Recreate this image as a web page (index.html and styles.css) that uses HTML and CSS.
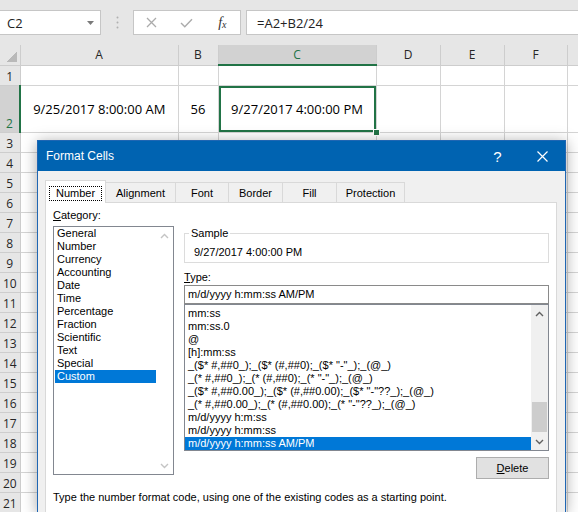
FILE: index.html
```html
<!DOCTYPE html>
<html lang="en">
<head>
    <meta charset="UTF-8">
    <title>Format Cells</title>
    <link rel="stylesheet" href="styles.css">
</head>
<body>

<div class="topbar">
    <div class="namebox">
        <span>C2</span>
        <svg width="7" height="4" viewBox="0 0 7 4"><polygon points="0,0 7,0 3.5,4" fill="#7a7a7a"/></svg>
    </div>
    <div class="grip">
        <svg width="3" height="13" viewBox="0 0 3 13"><circle cx="1.5" cy="1.5" r="1" fill="#b0b0b0"/><circle cx="1.5" cy="6.5" r="1" fill="#b0b0b0"/><circle cx="1.5" cy="11.5" r="1" fill="#b0b0b0"/></svg>
    </div>
    <div class="fxbtns">
        <span><svg width="11" height="11" viewBox="0 0 11 11"><path d="M1 1L10 10M10 1L1 10" stroke="#ababab" stroke-width="1.3"/></svg></span>
        <span><svg width="13" height="10" viewBox="0 0 13 10"><path d="M1 5L4.8 8.8L12 1.2" fill="none" stroke="#ababab" stroke-width="1.4"/></svg></span>
        <span class="fx">f<small>x</small></span>
    </div>
    <div class="formula">=A2+B2/24</div>
</div>

<table class="sheet">
    <colgroup>
        <col class="w-rh"><col class="w-a"><col class="w-b"><col class="w-c"><col class="w-d"><col class="w-e"><col class="w-f"><col class="w-g">
    </colgroup>
    <tr class="hdr">
        <th class="corner"></th><th>A</th><th>B</th><th class="sel-col">C</th><th>D</th><th>E</th><th>F</th><th></th>
    </tr>
    <tr><td class="rh">1</td><td></td><td></td><td></td><td></td><td></td><td></td><td></td></tr>
    <tr class="tall">
        <td class="rh sel-row">2</td>
        <td>9/25/2017 8:00:00 AM</td>
        <td>56</td>
        <td class="active">9/27/2017 4:00:00 PM<span class="handle"></span></td>
        <td></td><td></td><td></td><td></td>
    </tr>
    <tr><td class="rh">3</td><td></td><td></td><td></td><td></td><td></td><td></td><td></td></tr>
    <tr><td class="rh">4</td><td></td><td></td><td></td><td></td><td></td><td></td><td></td></tr>
    <tr><td class="rh">5</td><td></td><td></td><td></td><td></td><td></td><td></td><td></td></tr>
    <tr><td class="rh">6</td><td></td><td></td><td></td><td></td><td></td><td></td><td></td></tr>
    <tr><td class="rh">7</td><td></td><td></td><td></td><td></td><td></td><td></td><td></td></tr>
    <tr><td class="rh">8</td><td></td><td></td><td></td><td></td><td></td><td></td><td></td></tr>
    <tr><td class="rh">9</td><td></td><td></td><td></td><td></td><td></td><td></td><td></td></tr>
    <tr><td class="rh">10</td><td></td><td></td><td></td><td></td><td></td><td></td><td></td></tr>
    <tr><td class="rh">11</td><td></td><td></td><td></td><td></td><td></td><td></td><td></td></tr>
    <tr><td class="rh">12</td><td></td><td></td><td></td><td></td><td></td><td></td><td></td></tr>
    <tr><td class="rh">13</td><td></td><td></td><td></td><td></td><td></td><td></td><td></td></tr>
    <tr><td class="rh">14</td><td></td><td></td><td></td><td></td><td></td><td></td><td></td></tr>
    <tr><td class="rh">15</td><td></td><td></td><td></td><td></td><td></td><td></td><td></td></tr>
    <tr><td class="rh">16</td><td></td><td></td><td></td><td></td><td></td><td></td><td></td></tr>
    <tr><td class="rh">17</td><td></td><td></td><td></td><td></td><td></td><td></td><td></td></tr>
    <tr><td class="rh">18</td><td></td><td></td><td></td><td></td><td></td><td></td><td></td></tr>
    <tr><td class="rh">19</td><td></td><td></td><td></td><td></td><td></td><td></td><td></td></tr>
    <tr><td class="rh">20</td><td></td><td></td><td></td><td></td><td></td><td></td><td></td></tr>
    <tr><td class="rh">21</td><td></td><td></td><td></td><td></td><td></td><td></td><td></td></tr>
</table>

<div class="dialog">
    <div class="titlebar">
        <span class="title">Format Cells</span>
        <span class="help">?</span>
        <span class="close">
            <svg width="11" height="11" viewBox="0 0 11 11"><path d="M0.5 0.5L10.5 10.5M10.5 0.5L0.5 10.5" stroke="#fff" stroke-width="1.2"/></svg>
        </span>
    </div>
    <div class="dlg-body">
        <div class="tabs">
            <span class="tab active t-number"><span class="focus">Number</span></span>
            <span class="tab t-align">Alignment</span>
            <span class="tab t-font">Font</span>
            <span class="tab t-border">Border</span>
            <span class="tab t-fill">Fill</span>
            <span class="tab t-prot">Protection</span>
        </div>
        <div class="page">
            <div class="cols">
                <div class="left">
                    <div class="lbl"><u>C</u>ategory:</div>
                    <div class="listbox catlist">
                        <ul class="items">
                            <li>General</li>
                            <li>Number</li>
                            <li>Currency</li>
                            <li>Accounting</li>
                            <li>Date</li>
                            <li>Time</li>
                            <li>Percentage</li>
                            <li>Fraction</li>
                            <li>Scientific</li>
                            <li>Text</li>
                            <li>Special</li>
                            <li class="sel">Custom</li>
                        </ul>
                        <div class="vscroll off">
                            <span class="arrow"><svg width="9" height="6" viewBox="0 0 9 6"><path d="M1 5L4.5 1.5L8 5" fill="none" stroke="#c4c4c4" stroke-width="1.4"/></svg></span>
                            <span class="arrow bottom"><svg width="9" height="6" viewBox="0 0 9 6"><path d="M1 1L4.5 4.5L8 1" fill="none" stroke="#c4c4c4" stroke-width="1.4"/></svg></span>
                        </div>
                    </div>
                </div>
                <div class="right">
                    <fieldset class="sample">
                        <legend>Sample</legend>
                        <div class="sample-val">9/27/2017 4:00:00 PM</div>
                    </fieldset>
                    <div class="lbl type-lbl"><u>T</u>ype:</div>
                    <div class="typeinput">m/d/yyyy h:mm:ss AM/PM</div>
                    <div class="listbox typelist">
                        <ul class="items">
                            <li>mm:ss</li>
                            <li>mm:ss.0</li>
                            <li>@</li>
                            <li>[h]:mm:ss</li>
                            <li>_($* #,##0_);_($* (#,##0);_($* "-"_);_(@_)</li>
                            <li>_(* #,##0_);_(* (#,##0);_(* "-"_);_(@_)</li>
                            <li>_($* #,##0.00_);_($* (#,##0.00);_($* "-"??_);_(@_)</li>
                            <li>_(* #,##0.00_);_(* (#,##0.00);_(* "-"??_);_(@_)</li>
                            <li>m/d/yyyy h:m:ss</li>
                            <li>m/d/yyyy h:mm:ss</li>
                            <li class="sel">m/d/yyyy h:mm:ss AM/PM</li>
                        </ul>
                        <div class="vscroll">
                            <span class="arrow"><svg width="9" height="6" viewBox="0 0 9 6"><path d="M1 5L4.5 1.5L8 5" fill="none" stroke="#606060" stroke-width="1.4"/></svg></span>
                            <span class="thumb"></span>
                            <span class="arrow"><svg width="9" height="6" viewBox="0 0 9 6"><path d="M1 1L4.5 4.5L8 1" fill="none" stroke="#606060" stroke-width="1.4"/></svg></span>
                        </div>
                    </div>
                    <div class="btnrow"><button type="button"><u>D</u>elete</button></div>
                </div>
            </div>
            <p class="hint">Type the number format code, using one of the existing codes as a starting point.</p>
        </div>
    </div>
</div>

</body>
</html>
```

FILE: styles.css
```css
body {
    margin: 0;
    width: 578px;
    height: 512px;
    overflow: hidden;
    position: relative;
    background: #fff;
    font-family: "Open Sans", "Noto Sans", sans-serif;
    color: #000;
}

/* formula bar */
.topbar {
    height: 45px;
    box-sizing: border-box;
    padding-top: 10px;
    background: #e6e6e6;
    display: flex;
    align-items: flex-start;
}
.namebox {
    width: 101px;
    height: 25px;
    box-sizing: border-box;
    background: #fff;
    border: 1px solid #c6c6c6;
    border-left: 0;
    padding: 0 6px 0 7px;
    display: flex;
    align-items: center;
    justify-content: space-between;
    font-size: 13px;
    color: #222;
}
.grip {
    width: 32px;
    display: flex;
    justify-content: center;
    padding-top: 6px;
}
.fxbtns {
    width: 108px;
    height: 25px;
    box-sizing: border-box;
    background: #fff;
    border: 1px solid #c6c6c6;
    display: flex;
}
.fxbtns span {
    width: 36px;
    display: flex;
    align-items: center;
    justify-content: center;
}
.fxbtns .fx {
    font-family: "Liberation Serif", serif;
    font-style: italic;
    font-size: 14px;
    color: #333;
}
.fx small {
    font-size: 10px;
    margin-top: 3px;
}
.formula {
    flex: 1;
    margin-left: 5px;
    height: 25px;
    box-sizing: border-box;
    background: #fff;
    border: 1px solid #c6c6c6;
    border-right: 0;
    padding-left: 10px;
    display: flex;
    align-items: center;
    font-size: 13px;
    color: #222;
}

/* grid */
.sheet {
    border-collapse: collapse;
    table-layout: fixed;
    width: 587px;
    font-size: 13px;
}
.w-rh { width: 20px; }
.w-a { width: 158px; }
.w-b { width: 40px; }
.w-c { width: 158px; }
.w-d { width: 64px; }
.w-e { width: 64px; }
.w-f { width: 63px; }
.w-g { width: 20px; }

.sheet tr { height: 20px; }
.sheet tr.tall { height: 47px; }
.sheet td, .sheet th {
    border: 1px solid #d4d4d4;
    padding: 0;
    text-align: center;
    white-space: nowrap;
    overflow: visible;
}
.sheet th {
    background: #e6e6e6;
    border-color: #cdcdcd;
    border-top: 0;
    font-weight: normal;
    font-size: 12px;
    color: #262626;
}
.sheet th.corner {
    border-left: 0;
    background: linear-gradient(to bottom right, transparent 50%, #b9b9b9 50%) no-repeat right 3px bottom 3px / 11px 11px, #e6e6e6;
}
.sheet th.sel-col {
    background: #d2d2d2;
    color: #217346;
    border-bottom: 2px solid #217346;
}
.sheet td.rh {
    background: #e6e6e6;
    border-color: #cdcdcd;
    border-left: 0;
    font-size: 12px;
    color: #262626;
    vertical-align: bottom;
    line-height: 17px;
}
.sheet td.sel-row {
    background: #d2d2d2;
    color: #217346;
    border-right: 2px solid #217346;
}
.sheet td.active {
    position: relative;
    box-shadow: inset 0 0 0 2px #217346;
}
.handle {
    position: absolute;
    right: -4px;
    bottom: -4px;
    width: 5px;
    height: 5px;
    background: #217346;
    border: 1px solid #fff;
}

/* dialog, cut by the bottom of the window */
.dialog {
    position: absolute;
    left: 37px;
    top: 140px;
    width: 529px;
    height: 372px;
    box-sizing: border-box;
    border: 1px solid #1f66b3;
    border-bottom: 0;
    background: #f0f0f0;
    box-shadow: 0 2px 14px rgba(0, 0, 0, 0.35);
    font-family: "Liberation Sans", Arial, sans-serif;
    font-size: 11px;
    display: flex;
    flex-direction: column;
}
.titlebar {
    height: 30px;
    flex: none;
    background: #0063b1;
    color: #fff;
    display: flex;
    align-items: center;
}
.title {
    flex: 1;
    padding-left: 8px;
    font-size: 12px;
}
.help, .close {
    width: 45px;
    display: flex;
    justify-content: center;
}
.help {
    font-size: 15px;
}
.dlg-body {
    flex: 1;
    padding: 9px 8px 0 7px;
    display: flex;
    flex-direction: column;
}
.tabs {
    height: 22px;
    flex: none;
    display: flex;
    align-items: flex-end;
}
.tab {
    height: 20px;
    box-sizing: border-box;
    border: 1px solid #d9d9d9;
    border-bottom: 0;
    margin-right: -1px;
    display: flex;
    align-items: center;
    justify-content: center;
}
.tab.active {
    height: 23px;
    margin-bottom: -1px;
    padding-top: 3px;
    background: #fff;
    position: relative;
    z-index: 1;
}
.focus {
    border: 1px dotted #000;
    padding: 0 6px;
    line-height: 13px;
}
.t-number { width: 61px; }
.t-align { width: 71px; }
.t-font { width: 54px; }
.t-border { width: 55px; }
.t-fill { width: 55px; }
.t-prot { width: 69px; }

.page {
    flex: 1;
    background: #fff;
    border: 1px solid #d9d9d9;
    border-bottom: 0;
    padding: 5px 7px 0;
}
.cols {
    display: flex;
    gap: 10px;
}
.left { width: 121px; }
.right { width: 365px; }
.lbl { line-height: 14px; }

.listbox {
    box-sizing: border-box;
    border: 1px solid #828790;
    display: flex;
    background: #fff;
}
.items {
    flex: 1;
    margin: 0;
    padding: 0;
    list-style: none;
    line-height: 13px;
    white-space: nowrap;
    overflow: hidden;
}
.items li.sel {
    background: #0078d7;
    color: #fff;
}
.catlist {
    margin-top: 4px;
    height: 249px;
}
.catlist .items { padding-left: 1px; }
.catlist li { padding-left: 2px; }
.typelist {
    height: 147px;
}
.typelist .items { padding-top: 2px; }
.typelist li { padding-left: 3px; }

.vscroll {
    width: 17px;
    display: flex;
    flex-direction: column;
    background: #f0f0f0;
}
.vscroll.off { background: #fff; }
.arrow {
    height: 17px;
    display: flex;
    align-items: center;
    justify-content: center;
}
.arrow.bottom { margin-top: auto; }
.thumb {
    margin: auto 1px 1px;
    height: 30px;
    background: #cdcdcd;
}

.sample {
    margin: 18px 0 0;
    padding: 5px 9px 3px 4px;
    border: 1px solid #dcdcdc;
}
.sample legend {
    padding: 0 2px;
    line-height: 14px;
}
.sample-val {
    padding-left: 5px;
    line-height: 14px;
}
.type-lbl { margin-top: 7px; }
.typeinput {
    margin-top: 1px;
    height: 19px;
    box-sizing: border-box;
    border: 1px solid #8a8a8a;
    padding-left: 3px;
    line-height: 17px;
}
.btnrow {
    display: flex;
    justify-content: flex-end;
    margin-top: 6px;
}
.btnrow button {
    width: 73px;
    height: 22px;
    padding: 0;
    border: 1px solid #adadad;
    background: #e1e1e1;
    font: inherit;
    color: #000;
}
.hint {
    margin: 11px 0 0;
    line-height: 14px;
}
```
